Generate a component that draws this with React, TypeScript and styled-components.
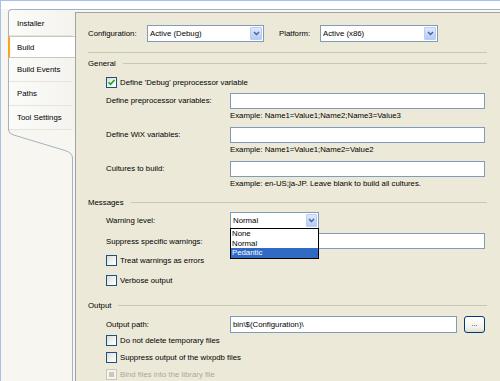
import React from "react";
import styled, { createGlobalStyle, css } from "styled-components";

const Global = createGlobalStyle`
  html, body { margin: 0; padding: 0; background: #ffffff; }
  body { width: 500px; height: 381px; overflow: hidden; }
  * { box-sizing: border-box; }
`;

const FONT = `"Liberation Sans", Arial, sans-serif`;

const Root = styled.div`
  width: 500px;
  height: 381px;
  display: flex;
  flex-direction: column;
  border-top: 1px solid #a8c2e6;
  border-left: 1px solid #a8c2e6;
  background: #ffffff;
  font-family: ${FONT};
  font-size: 7.8px;
  color: #000;
  overflow: hidden;
`;

const TopBand = styled.div`
  height: 8px;
  flex: none;
  background: #ffffff;
`;

const Body = styled.div`
  flex: 1;
  display: flex;
  min-height: 0;
  background: #f7f6f1;
`;

const Side = styled.div`
  width: 74px;
  flex: none;
  display: flex;
  flex-direction: column;
  padding-left: 7px;
`;

const TabBox = styled.div`
  border-top: 1px solid #a5b2c1;
  border-left: 1px solid #a5b2c1;
  border-top-left-radius: 4px;
  padding-top: 2px;
  display: flex;
  flex-direction: column;
  background: linear-gradient(90deg, #fbfbf9 0%, #f4f3ee 100%);
`;

const Tab = styled.div<{ $active?: boolean }>`
  height: ${(p) => (p.$active ? 22 : 24)}px;
  display: flex;
  align-items: center;
  padding-left: 8px;
  margin: 0 3px 0 0;
  border-bottom: 1px solid #e6e4dc;
  ${(p) =>
    p.$active &&
    css`
      margin: 0 0 0 -1px;
      padding-left: 7px;
      background: #ffffff;
      border-top: 1px solid #c9c7bd;
      border-bottom: 1px solid #c9c7bd;
      border-left: 2px solid #f3a526;
    `}
`;

const Curl = styled.svg`
  display: block;
  width: 67px;
  height: 28px;
  flex: none;
`;

const SideFill = styled.div`
  flex: 1;
  margin-right: 2px;
  border-right: 1px solid #a5b2c1;
`;

const PanelWrap = styled.div`
  flex: 1;
  display: flex;
  border-top: 1px solid #a5b2c1;
  padding-top: 2px;
`;

const Panel = styled.div`
  flex: 1;
  background: #ece9d8;
  border-top: 1px solid #9ea3a8;
  border-left: 1px solid #9ea3a8;
  padding: 12px 13px 0 12px;
  display: flex;
  flex-direction: column;
`;

const TopRow = styled.div`
  height: 17px;
  display: flex;
  align-items: center;
`;

const TopLabel = styled.span<{ $w: number }>`
  width: ${(p) => p.$w}px;
  flex: none;
`;

const SelectBox = styled.div<{ $w: number }>`
  position: relative;
  width: ${(p) => p.$w}px;
  height: 17px;
  flex: none;
  border: 1px solid #7f9db9;
  background: #fff;
  display: flex;
  align-items: center;
  padding-left: 2px;
`;

const SelectText = styled.span`
  flex: 1;
  white-space: nowrap;
`;

const ArrowBtn = styled.div<{ $w: number }>`
  width: ${(p) => p.$w}px;
  align-self: stretch;
  margin: 1px;
  border: 1px solid #b8cdf8;
  border-radius: 1px;
  background: linear-gradient(180deg, #dfe8fd 0%, #c4d5fb 60%, #b6cbf8 100%);
  display: flex;
  align-items: center;
  justify-content: center;
`;

const Gap = styled.div<{ $w: number }>`
  width: ${(p) => p.$w}px;
  flex: none;
`;

const Rule = styled.div`
  margin-top: 10px;
  border-top: 1px solid #c9c6b4;
`;

const Header = styled.div<{ $mt: number }>`
  margin-top: ${(p) => p.$mt}px;
  height: 12px;
  display: flex;
  align-items: center;
`;

const HeaderLine = styled.div`
  flex: 1;
  margin-left: 7px;
  border-top: 1px solid #c9c6b4;
`;

const Section = styled.div`
  padding-left: 18px;
  display: flex;
  flex-direction: column;
`;

const CheckRow = styled.div<{ $mt: number; $disabled?: boolean }>`
  margin-top: ${(p) => p.$mt}px;
  height: 13px;
  display: flex;
  align-items: center;
  color: ${(p) => (p.$disabled ? "#aca899" : "#000")};
`;

const Box = styled.div<{ $disabled?: boolean }>`
  width: 11px;
  height: 11px;
  flex: none;
  margin-right: 3px;
  border: 1px solid ${(p) => (p.$disabled ? "#cac8bb" : "#1c5180")};
  background: ${(p) =>
    p.$disabled
      ? "#f4f3ee"
      : "linear-gradient(135deg, #dcdcd7 0%, #f4f4f0 60%, #ffffff 100%)"};
  display: flex;
  align-items: center;
  justify-content: center;
`;

const DisabledMark = styled.div`
  width: 5px;
  height: 5px;
  background: #cac8bb;
`;

const FieldRow = styled.div<{ $mt: number; $h?: number }>`
  margin-top: ${(p) => p.$mt}px;
  height: ${(p) => p.$h ?? 16}px;
  display: flex;
  align-items: center;
`;

const FieldLabel = styled.span`
  width: 124px;
  flex: none;
  white-space: nowrap;
`;

const TextInput = styled.div<{ $behind?: boolean }>`
  flex: 1;
  align-self: stretch;
  margin-right: 2px;
  border: 1px solid #7f9db9;
  background: #fff;
  display: flex;
  align-items: center;
  padding-left: 2px;
  white-space: nowrap;
`;

const Hint = styled.div<{ $mt: number }>`
  margin-top: ${(p) => p.$mt}px;
  height: 10px;
  line-height: 10px;
  padding-left: 124px;
  white-space: nowrap;
`;

const Browse = styled.div`
  width: 21px;
  height: 17px;
  flex: none;
  margin-left: 5px;
  margin-right: 2px;
  border: 1px solid #003c74;
  border-radius: 3px;
  background: linear-gradient(180deg, #ffffff 0%, #f3f2ec 70%, #dedbd0 100%);
  display: flex;
  align-items: center;
  justify-content: center;
  font-size: 7px;
  padding-bottom: 2px;
`;

const DropList = styled.div`
  position: absolute;
  left: -1px;
  top: 15px;
  width: 89px;
  border: 1px solid #000;
  background: #fff;
  z-index: 5;
`;

const DropItem = styled.div<{ $sel?: boolean }>`
  height: 9.5px;
  line-height: 9.5px;
  padding-left: 1px;
  background: ${(p) => (p.$sel ? "#316ac5" : "#fff")};
  color: ${(p) => (p.$sel ? "#fff" : "#000")};
`;

const Chevron = () => (
  <svg width="7" height="5" viewBox="0 0 7 5">
    <path d="M1 1 L3.5 3.5 L6 1" fill="none" stroke="#4d6185" strokeWidth="1.4" />
  </svg>
);

const Check = () => (
  <svg width="9" height="9" viewBox="0 0 9 9">
    <path d="M1.5 4.2 L3.5 6.3 L7.5 2" fill="none" stroke="#21a121" strokeWidth="1.6" />
  </svg>
);

const CheckBox = ({
  label,
  mt,
  checked,
  disabled,
}: {
  label: string;
  mt: number;
  checked?: boolean;
  disabled?: boolean;
}) => (
  <CheckRow $mt={mt} $disabled={disabled}>
    <Box $disabled={disabled}>
      {checked && <Check />}
      {disabled && <DisabledMark />}
    </Box>
    {label}
  </CheckRow>
);

const tabs = ["Installer", "Build", "Build Events", "Paths", "Tool Settings"];

export default function App() {
  return (
    <>
      <Global />
      <Root>
        <TopBand />
        <Body>
          <Side>
            <TabBox>
              {tabs.map((t) => (
                <Tab key={t} $active={t === "Build"}>
                  {t}
                </Tab>
              ))}
            </TabBox>
            <Curl viewBox="0 0 67 28">
              <path
                d="M0.5 0 Q0.8 3.5 5 4.8 L57 20.5 Q64.5 22.8 64.5 28"
                fill="none"
                stroke="#a5b2c1"
                strokeWidth="1"
              />
            </Curl>
            <SideFill />
          </Side>
          <PanelWrap>
            <Panel>
              <TopRow>
                <TopLabel $w={59}>Configuration:</TopLabel>
                <SelectBox $w={117}>
                  <SelectText>Active (Debug)</SelectText>
                  <ArrowBtn $w={12}>
                    <Chevron />
                  </ArrowBtn>
                </SelectBox>
                <Gap $w={15} />
                <TopLabel $w={41}>Platform:</TopLabel>
                <SelectBox $w={118}>
                  <SelectText>Active (x86)</SelectText>
                  <ArrowBtn $w={12}>
                    <Chevron />
                  </ArrowBtn>
                </SelectBox>
              </TopRow>
              <Rule />

              <Header $mt={5}>
                General
                <HeaderLine />
              </Header>
              <Section>
                <CheckBox mt={6} checked label="Define 'Debug' preprocessor variable" />
                <FieldRow $mt={4}>
                  <FieldLabel>Define preprocessor variables:</FieldLabel>
                  <TextInput />
                </FieldRow>
                <Hint $mt={2}>Example: Name1=Value1;Name2;Name3=Value3</Hint>
                <FieldRow $mt={6}>
                  <FieldLabel>Define WiX variables:</FieldLabel>
                  <TextInput />
                </FieldRow>
                <Hint $mt={2}>Example: Name1=Value1;Name2=Value2</Hint>
                <FieldRow $mt={6}>
                  <FieldLabel>Cultures to build:</FieldLabel>
                  <TextInput />
                </FieldRow>
                <Hint $mt={2}>Example: en-US;ja-JP. Leave blank to build all cultures.</Hint>
              </Section>

              <Header $mt={8}>
                Messages
                <HeaderLine />
              </Header>
              <Section>
                <FieldRow $mt={4} $h={17}>
                  <FieldLabel>Warning level:</FieldLabel>
                  <SelectBox $w={89}>
                    <SelectText>Normal</SelectText>
                    <ArrowBtn $w={11}>
                      <Chevron />
                    </ArrowBtn>
                    <DropList>
                      <DropItem>None</DropItem>
                      <DropItem>Normal</DropItem>
                      <DropItem $sel>Pedantic</DropItem>
                    </DropList>
                  </SelectBox>
                </FieldRow>
                <FieldRow $mt={4}>
                  <FieldLabel>Suppress specific warnings:</FieldLabel>
                  <TextInput />
                </FieldRow>
                <CheckBox mt={5} label="Treat warnings as errors" />
                <CheckBox mt={7} label="Verbose output" />
              </Section>

              <Header $mt={12}>
                Output
                <HeaderLine />
              </Header>
              <Section>
                <FieldRow $mt={5} $h={17}>
                  <FieldLabel>Output path:</FieldLabel>
                  <TextInput>bin\$(Configuration)\</TextInput>
                  <Browse>...</Browse>
                </FieldRow>
                <CheckBox mt={1} label="Do not delete temporary files" />
                <CheckBox mt={4} label="Suppress output of the wixpdb files" />
                <CheckBox mt={4} disabled label="Bind files into the library file" />
              </Section>
            </Panel>
          </PanelWrap>
        </Body>
      </Root>
    </>
  );
}
